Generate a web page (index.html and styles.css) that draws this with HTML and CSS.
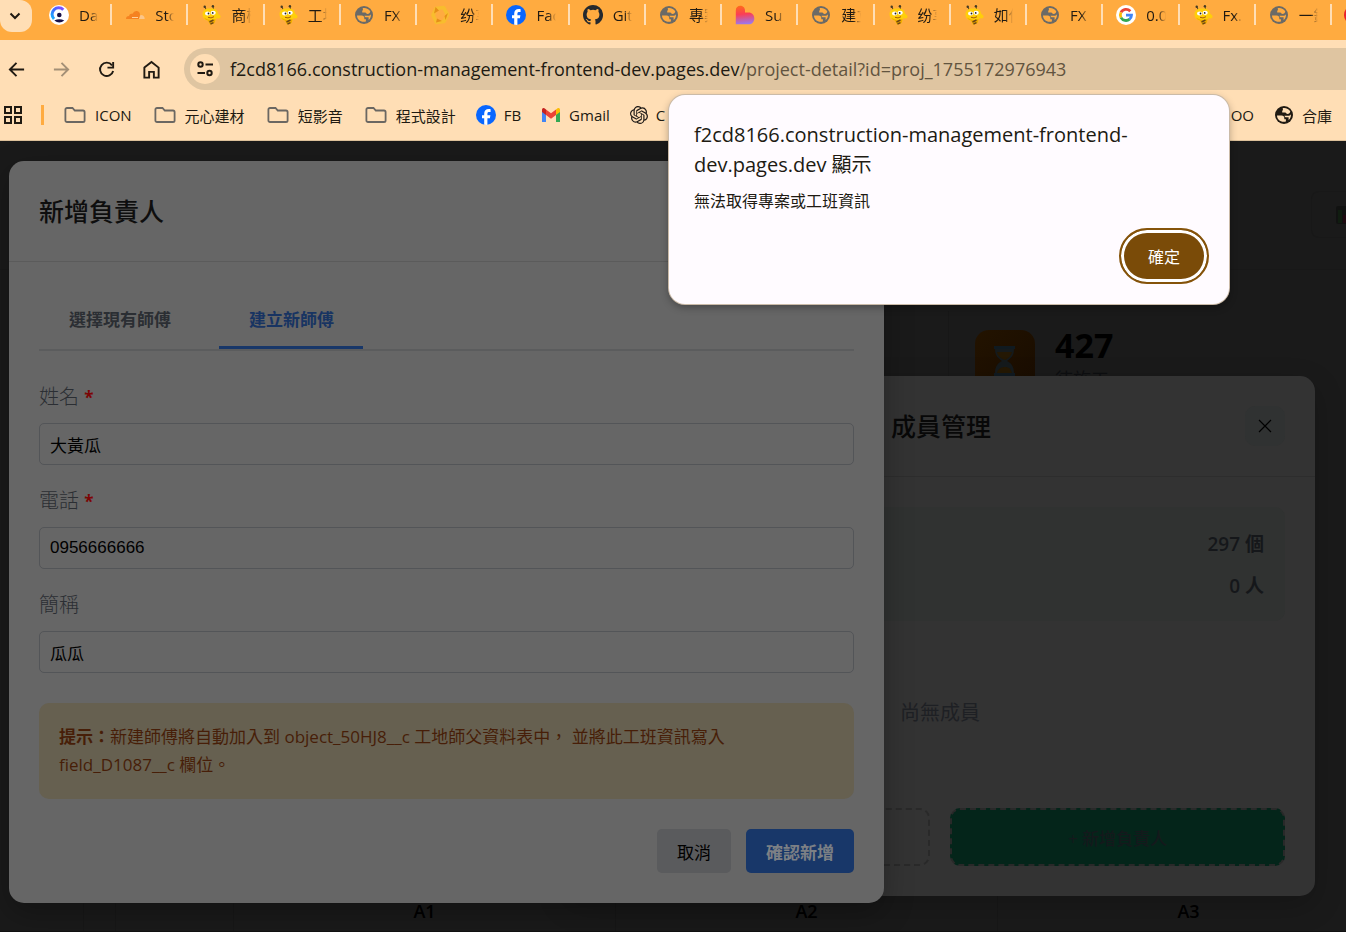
FILE: index.html
```html
<!DOCTYPE html>
<html lang="zh-Hant">
<head>
<meta charset="utf-8">
<meta name="viewport" content="width=device-width, initial-scale=1">
<title>專案詳情</title>
<link rel="stylesheet" href="styles.css">
</head>
<body>
<svg class="sprite" aria-hidden="true">
  <symbol id="i-globe" viewBox="0 0 20 20"><circle cx="10" cy="10" r="9" fill="currentColor"/><path class="globe-land" d="M3 10.500h4.500c2 0 2.800 1 2.800 2.500v1.200h1.600v2.300c-4.900 1.200-8.900-1.700-8.900-6zM8.600 3.200c3-.6 6.400.7 7.700 3.400-.3 1.700-1.300 2.400-2.700 2.400-1 0-1.300-.8-2.200-1.500H8.200V5.800c.8-.4 1-1.400.4-2.600zM16.900 9.200c.3 2.300-.6 4.500-2.300 5.800v-2.700h-2.400c-1 0-1.700-.6-1.700-1.500h3.300c1.600 0 2.500-.5 3.100-1.600z"/></symbol>
  <symbol id="i-bee" viewBox="0 0 20 20"><path d="M5.500 5.500 4 2M12.500 4.500 12 1" stroke="#59421c" stroke-width="1"/><circle cx="3.700" cy="1.800" r="1.200" fill="#453a22"/><circle cx="11.900" cy="1.300" r="1.200" fill="#453a22"/><path d="M1.500 9c0-4 3.900-6 8-5.500C13.600 3 17 5 17 8.500l2.500 2.200c.5 2.300-1.500 3.400-4 2.300L13.500 18 9 19.500l-2-4C3.500 15.500 1.500 12.500 1.500 9z" fill="#ffce0a"/><path d="M3 12.500q5 4 11.500 1.500L13.500 18 9 19.500l-2-4q-2.800-.6-4-3z" fill="#f0a800"/><path d="m8.500 17 4-2M9.500 19l3-1.400" stroke="#6a4515" stroke-width="1.400"/><ellipse cx="6.600" cy="8.500" rx="2.600" ry="2.100" fill="#fff"/><ellipse cx="12.200" cy="7.800" rx="2.600" ry="2.100" fill="#fff"/><circle cx="7.500" cy="8.500" r=".9" fill="#222"/><circle cx="11.700" cy="7.900" r=".9" fill="#222"/><path d="M7 12.300q3 1.600 6-.6" fill="none" stroke="#a65b07"/></symbol>
  <symbol id="i-fb" viewBox="0 0 20 20"><circle cx="10" cy="10" r="10" fill="#0866ff"/><path d="M8.200 19.800v-6.500H6v-3h2.200V8.800c0-3.300 1.500-4.800 4.700-4.800.6 0 1.300.1 1.700.2v2.700h-1.300c-1.500 0-1.900.6-1.900 2v1.400h3l-.5 3h-2.500v6.600z" fill="#fff"/></symbol>
  <symbol id="i-folder" viewBox="0 0 22 18"><path d="M3 2h5.500l2.300 2.500H19a1.600 1.600 0 0 1 1.600 1.600v8.300A1.600 1.600 0 0 1 19 16H3a1.600 1.600 0 0 1-1.600-1.600V3.600A1.600 1.600 0 0 1 3 2z" fill="none" stroke="#6b6762" stroke-width="1.800"/></symbol>
</svg>

<header class="browser">
  <nav class="tabstrip" aria-label="分頁">
    <button class="tab-search" aria-label="搜尋分頁"><svg width="12" height="12" viewBox="0 0 12 12"><path d="m1.500 3.500 4.500 4.500 4.500-4.500" fill="none" stroke="#201a12" stroke-width="2"/></svg></button>
    <a class="tab" href="#"><svg class="fav" viewBox="0 0 20 20"><defs><linearGradient id="clerk" x1="0" y1="1" x2="1" y2="0"><stop offset="0" stop-color="#17b3ff"/><stop offset=".5" stop-color="#3f6bff"/><stop offset="1" stop-color="#8a4dff"/></linearGradient></defs><circle cx="10" cy="10" r="10" fill="#fff"/><path d="M14.300 4.700A6.300 6.300 0 0 0 5 14" fill="none" stroke="url(#clerk)" stroke-width="3"/><circle cx="10.300" cy="10" r="2.300" fill="#171047"/><path d="M5.300 15.600q5-2.800 10 0-5 4-10 0z" fill="#171047"/></svg><span>Da</span></a>
    <a class="tab" href="#"><svg class="fav" viewBox="0 0 20 20"><path d="M1 14q0-3 3-3 .5-3 3.500-2.200Q9 5.500 12 6q3 .7 3 4l-1 4z" fill="#f58220"/><path d="m14 14 1.500-4q4-.2 4.200 4z" fill="#fbc68a"/><path d="M7 12.500h6" stroke="#ffd19a"/></svg><span>Sto</span></a>
    <a class="tab" href="#"><svg class="fav"><use href="#i-bee"/></svg><span>商機</span></a>
    <a class="tab" href="#"><svg class="fav"><use href="#i-bee"/></svg><span>工地</span></a>
    <a class="tab" href="#"><svg class="fav globe"><use href="#i-globe"/></svg><span>FX</span></a>
    <a class="tab" href="#"><svg class="fav" viewBox="0 0 20 20"><path d="m6 3.500 7.500-1 4 7-3.500 7-7.500 1L3 10z" fill="none" stroke="#f8bd2e" stroke-width="3.600" stroke-linejoin="round"/><path d="m5.500 2 3.500 3.500-5 3zM18 8l-3.500 3 1 4zM6 17.500l1-4 5 2.500z" fill="#e58e18"/></svg><span>纷享</span></a>
    <a class="tab" href="#"><svg class="fav"><use href="#i-fb"/></svg><span>Fac</span></a>
    <a class="tab" href="#"><svg class="fav" viewBox="0 0 16 16"><path fill="#25292e" d="M8 0C3.580 0 0 3.580 0 8c0 3.540 2.290 6.530 5.470 7.590.4.070.55-.17.55-.38 0-.19-.01-.82-.01-1.490-2.010.37-2.530-.49-2.690-.94-.09-.23-.48-.94-.82-1.130-.28-.15-.68-.52-.01-.53.63-.01 1.080.58 1.230.82.72 1.210 1.870.87 2.330.66.07-.52.28-.87.51-1.070-1.780-.2-3.640-.89-3.640-3.950 0-.87.31-1.590.82-2.150-.08-.2-.36-1.020.08-2.120 0 0 .67-.21 2.200.82a7.500 7.500 0 0 1 4 0c1.530-1.040 2.200-.82 2.200-.82.44 1.100.16 1.920.08 2.120.51.56.82 1.270.82 2.150 0 3.070-1.870 3.750-3.650 3.950.29.25.54.73.54 1.480 0 1.070-.01 1.930-.01 2.200 0 .21.15.46.55.38A8 8 0 0 0 8 0z"/></svg><span>Git</span></a>
    <a class="tab" href="#"><svg class="fav globe"><use href="#i-globe"/></svg><span>專案</span></a>
    <a class="tab" href="#"><svg class="fav" viewBox="0 0 20 20"><defs><linearGradient id="lov" x1=".3" y1="0" x2=".4" y2="1"><stop offset="0" stop-color="#ff6a1a"/><stop offset=".45" stop-color="#fb3e55"/><stop offset="1" stop-color="#9a78f0"/></linearGradient></defs><path d="M.8 5.500C.8 2.300 3 .8 5.300.8S10 2.400 10 5.500v2h3.600c3.400 0 5.700 2.600 5.700 5.900s-2.400 5.900-5.700 5.900H.8z" fill="url(#lov)"/></svg><span>Su</span></a>
    <a class="tab" href="#"><svg class="fav globe"><use href="#i-globe"/></svg><span>建立</span></a>
    <a class="tab" href="#"><svg class="fav"><use href="#i-bee"/></svg><span>纷享</span></a>
    <a class="tab" href="#"><svg class="fav"><use href="#i-bee"/></svg><span>如何</span></a>
    <a class="tab" href="#"><svg class="fav globe"><use href="#i-globe"/></svg><span>FX</span></a>
    <a class="tab" href="#"><svg class="fav" viewBox="0 0 20 20"><circle cx="10" cy="10" r="10" fill="#fff"/><g fill="none" stroke-width="2.800"><path d="M14.300 6.200A5.700 5.700 0 0 0 5 7.400" stroke="#ea4335"/><path d="M5 7.300a5.700 5.700 0 0 0 0 5.400" stroke="#fbbc05"/><path d="M5 12.600a5.700 5.700 0 0 0 8.600 1.600" stroke="#34a853"/><path d="M13.500 14.300a5.700 5.700 0 0 0 2-4.100H10" stroke="#4285f4"/></g></svg><span>0.0</span></a>
    <a class="tab" href="#"><svg class="fav"><use href="#i-bee"/></svg><span>Fx.</span></a>
    <a class="tab" href="#"><svg class="fav globe"><use href="#i-globe"/></svg><span>一鍵</span></a>
    <a class="tab-next" href="#" aria-label="下一個分頁"><svg class="fav" viewBox="0 0 20 20"><circle cx="10" cy="10" r="10" fill="#e8202a"/></svg></a>
  </nav>

  <div class="toolbar">
    <button class="tool" aria-label="返回"><svg viewBox="0 0 20 20"><path d="M18 10H3.500M10 3 3 10l7 7" fill="none" stroke="#201a12" stroke-width="2"/></svg></button>
    <button class="tool" aria-label="前進"><svg viewBox="0 0 20 20"><path d="M2 10h14.500M10 3l7 7-7 7" fill="none" stroke="#a38f76" stroke-width="2"/></svg></button>
    <button class="tool" aria-label="重新載入"><svg viewBox="0 0 20 20"><path d="M15.800 5.600A7 7 0 1 0 17 11.500" fill="none" stroke="#201a12" stroke-width="2"/><path d="M17 2v6h-6" fill="none" stroke="#201a12" stroke-width="2"/></svg></button>
    <button class="tool" aria-label="首頁"><svg viewBox="0 0 20 20"><path d="M2.500 8 10 2l7.500 6v10.500h-5v-6h-5v6h-5z" fill="none" stroke="#201a12" stroke-width="2"/></svg></button>
    <div class="omnibox">
      <button class="site-info" aria-label="網站資訊"><svg width="18" height="18" viewBox="0 0 18 18"><g fill="none" stroke="#201a12" stroke-width="2"><circle cx="4.500" cy="4.500" r="2.200"/><path d="M9.500 4.500H17M1.500 13H9"/><circle cx="13.500" cy="13" r="2.200"/></g></svg></button>
      <span class="url">f2cd8166.construction-management-frontend-dev.pages.dev<span class="path">/project-detail?id=proj_1755172976943</span></span>
    </div>
  </div>

  <nav class="bookmarks" aria-label="書籤">
    <button class="apps" aria-label="應用程式"><svg width="18" height="18" viewBox="0 0 18 18"><g fill="none" stroke="#201a12" stroke-width="2"><rect x="1" y="1" width="6" height="6"/><rect x="11" y="1" width="6" height="6"/><rect x="1" y="11" width="6" height="6"/><rect x="11" y="11" width="6" height="6"/></g></svg></button>
    <span class="divider"></span>
    <a class="mark" href="#"><svg class="folder"><use href="#i-folder"/></svg>ICON</a>
    <a class="mark" href="#"><svg class="folder"><use href="#i-folder"/></svg>元心建材</a>
    <a class="mark" href="#"><svg class="folder"><use href="#i-folder"/></svg>短影音</a>
    <a class="mark" href="#"><svg class="folder"><use href="#i-folder"/></svg>程式設計</a>
    <a class="mark" href="#"><svg class="fav"><use href="#i-fb"/></svg>FB</a>
    <a class="mark" href="#"><svg class="fav" viewBox="0 0 20 20"><path d="M1 5v12h4V9z" fill="#4285f4"/><path d="M15 9v8h4V5z" fill="#34a853"/><path d="m15 4.500 1.600-1.300C17.800 2.400 19 3.300 19 4.700V7l-4 3z" fill="#fbbc04"/><path d="M5 4.500 10 8.300l5-3.800V10l-5 3.800L5 10z" fill="#ea4335"/><path d="M1 7V4.700c0-1.400 1.200-2.300 2.400-1.500L5 4.500V10z" fill="#c5221f"/></svg>Gmail</a>
    <a class="mark" href="#"><svg class="fav gpt" viewBox="0 0 24 24"><path fill="#1f1a17" d="M22.280 9.820a5.980 5.980 0 0 0-.52-4.910 6.050 6.050 0 0 0-6.510-2.900A6.070 6.070 0 0 0 4.980 4.180a5.980 5.980 0 0 0-4 2.900 6.050 6.050 0 0 0 .74 7.100 5.980 5.980 0 0 0 .51 4.910 6.050 6.050 0 0 0 6.510 2.900A5.980 5.980 0 0 0 13.260 24a6.060 6.060 0 0 0 5.770-4.210 5.990 5.990 0 0 0 4-2.900 6.060 6.060 0 0 0-.75-7.070zm-9.020 12.610a4.480 4.480 0 0 1-2.880-1.040l.14-.08 4.780-2.760a.8.8 0 0 0 .39-.68v-6.740l2.020 1.170a.07.07 0 0 1 .04.050v5.580a4.500 4.500 0 0 1-4.490 4.500zm-9.660-4.130a4.470 4.470 0 0 1-.54-3.010l.14.090 4.780 2.760a.77.77 0 0 0 .78 0l5.840-3.370v2.330a.08.08 0 0 1-.03.060L9.740 19.950a4.500 4.500 0 0 1-6.140-1.650zM2.340 7.900a4.490 4.490 0 0 1 2.370-1.970V11.600a.77.77 0 0 0 .39.680l5.810 3.350-2.020 1.170a.08.08 0 0 1-.07 0l-4.830-2.790A4.500 4.500 0 0 1 2.340 7.870zm16.600 3.850-5.840-3.390L15.120 7.200a.08.08 0 0 1 .07 0l4.830 2.790a4.490 4.490 0 0 1-.68 8.100v-5.680a.79.79 0 0 0-.4-.66zm2.010-3.020-.14-.09-4.770-2.780a.78.78 0 0 0-.79 0L9.410 9.230V6.900a.07.07 0 0 1 .03-.06l4.830-2.790a4.500 4.500 0 0 1 6.680 4.660zM8.310 12.860l-2.020-1.160a.08.08 0 0 1-.04-.06V6.070a4.500 4.500 0 0 1 7.380-3.450l-.14.080-4.780 2.760a.8.8 0 0 0-.39.680zm1.090-2.370 2.610-1.500 2.600 1.500v3l-2.600 1.500-2.610-1.500z"/></svg>C</a>
    <a class="mark mark-end" href="#">OO</a>
    <a class="mark" href="#"><svg class="fav globe dark"><use href="#i-globe"/></svg>合庫</a>
  </nav>
</header>

<main class="page">
  <section class="backdrop">
    <div class="page-head">
      <button class="report" aria-label="報表"><svg width="20" height="18" viewBox="0 0 20 18"><rect width="20" height="18" rx="2" fill="#111211"/><path d="M2 4h4v13H2z" fill="#101d10"/><path d="M7 9h5v8H7z" fill="#200a11"/></svg></button>
    </div>
    <div class="stat">
      <svg class="stat-icon" viewBox="0 0 60 60"><defs><linearGradient id="amber" x1="0" y1="0" x2="1" y2="1"><stop offset="0" stop-color="#231300"/><stop offset="1" stop-color="#180c00"/></linearGradient></defs><rect width="60" height="60" rx="14" fill="url(#amber)"/><path d="M19 16h21v3H19zM19 43h21v3H19z" fill="#101a20"/><path d="M20 19h19c0 7-3 9-7 12 4 2 7 5 7 12H20c0-7 3-10 7-12-4-3-7-5-7-12z" fill="#151a1c"/><path d="M22 22h15c-1 4-3 6-7 8-5-2-7-4-8-8zM22 43c1-4 4-6 8-6s6 2 7 6z" fill="#241804"/></svg>
      <div><strong class="stat-value">427</strong><span class="stat-label">待施工</span></div>
    </div>
    <div class="units"><span></span><span></span><span></span><span>A1</span><span>A2</span><span>A3</span></div>
  </section>

  <section class="modal members" aria-labelledby="members-title">
    <header class="modal-head">
      <h2 id="members-title">成員管理</h2>
      <button class="close" aria-label="關閉"><svg width="14" height="14" viewBox="0 0 14 14"><path d="m1 1 12 12M13 1 1 13" stroke="#000" stroke-width="1.200"/></svg></button>
    </header>
    <div class="modal-body">
      <div class="summary"><span>297 個</span><span>0 人</span></div>
      <p class="empty">尚無成員</p>
      <div class="member-actions">
        <button class="dashed" aria-label="新增成員"></button>
        <button class="dashed lead">+ 新增負責人</button>
      </div>
    </div>
  </section>

  <section class="modal create" aria-labelledby="create-title">
    <header class="modal-head"><h2 id="create-title">新增負責人</h2></header>
    <form class="modal-body">
      <div class="tabs">
        <button type="button" class="tab-btn">選擇現有師傅</button>
        <button type="button" class="tab-btn active">建立新師傅</button>
      </div>
      <div class="field"><label for="name">姓名 <b>*</b></label><input id="name" type="text" value="大黃瓜"></div>
      <div class="field"><label for="phone">電話 <b>*</b></label><input id="phone" type="tel" value="0956666666"></div>
      <div class="field"><label for="nick">簡稱</label><input id="nick" type="text" value="瓜瓜"></div>
      <p class="hint"><strong>提示：</strong>新建師傅將自動加入到 object_50HJ8__c 工地師父資料表中， 並將此工班資訊寫入 field_D1087__c 欄位。</p>
      <div class="form-actions">
        <button type="button" class="btn">取消</button>
        <button type="button" class="btn primary">確認新增</button>
      </div>
    </form>
  </section>
</main>

<div class="alert" role="alertdialog" aria-labelledby="alert-title">
  <h1 id="alert-title">f2cd8166.construction-management-frontend-dev.pages.dev 顯示</h1>
  <p>無法取得專案或工班資訊</p>
  <button class="ok">確定</button>
</div>
</body>
</html>
```
FILE: styles.css
```css
* { box-sizing: border-box; }

body {
  margin: 0;
  min-height: 100vh;
  display: flex;
  flex-direction: column;
  overflow: hidden;
  background: #1a1a1a;
  color: #201a12;
  font-family: "Open Sans", "Noto Sans CJK TC", sans-serif;
  font-size: 15px;
}

button, input { font: inherit; color: inherit; margin: 0; }
button { border: 0; padding: 0; background: none; }
a { color: inherit; text-decoration: none; }
h1, h2, p { margin: 0; font-weight: 400; }
svg { display: block; flex: none; }
.sprite { position: absolute; width: 0; height: 0; }

/* Browser chrome */
.browser { background: #ffdeb5; border-bottom: 1px solid #dcc09a; }

.tabstrip { display: flex; height: 40px; background: #ffab40; overflow: hidden; }
.tab-search {
  width: 32px;
  height: 32px;
  padding-right: 2px;
  margin-right: 4px;
  display: grid;
  place-items: center;
  flex: none;
  background: #ffdeb5;
  border-radius: 0 12px 12px 12px;
}
.tab {
  position: relative;
  flex: 1;
  min-width: 0;
  height: 30px;
  display: flex;
  align-items: center;
  gap: 10px;
  padding: 0 14px 0 13px;
  line-height: 20px;
}
.tab span {
  flex: 1;
  min-width: 0;
  overflow: hidden;
  white-space: nowrap;
  mask-image: linear-gradient(90deg, #000 60%, transparent);
}
.tab::after {
  content: "";
  position: absolute;
  right: 0;
  top: 4px;
  width: 2px;
  height: 21px;
  background: #ffdeb5;
}
.tab-next { width: 14px; padding: 5px 0 0 12px; flex: none; }
.fav { width: 20px; height: 20px; }
.globe { --land: #ffab40; color: #6b6a66; }
.globe-land { fill: var(--land); }
.globe.dark { --land: #ffdeb5; color: #201a12; }
.fav.gpt { width: 18px; height: 18px; }

.toolbar { display: flex; align-items: center; height: 58px; padding-left: 4px; }
.tool { width: 24px; height: 24px; margin-right: 21px; display: grid; place-items: center; flex: none; }
.tool svg { width: 19px; height: 19px; }
.omnibox {
  flex: 1;
  min-width: 0;
  height: 42px;
  display: flex;
  align-items: center;
  gap: 10px;
  padding-left: 6px;
  background: #dfc5a1;
  border-radius: 21px 0 0 21px;
}
.site-info {
  width: 30px;
  height: 30px;
  display: grid;
  place-items: center;
  background: #ffdeb5;
  border-radius: 50%;
}
.url { font-size: 18px; white-space: nowrap; }
.path { color: #62543f; }

.bookmarks { display: flex; align-items: center; height: 42px; padding: 0 14px 8px 4px; white-space: nowrap; }
.divider { width: 3px; height: 20px; margin: 0 18px 0 19px; background: #ffab40; }
.mark { display: flex; align-items: center; gap: 8px; margin-right: 20px; }
.mark:last-child { margin-right: 0; }
.mark-end { margin-left: auto; }
.folder { width: 22px; height: 18px; margin: 0 1px 0 2px; }

/* Page */
.page { position: relative; flex: 1; min-height: 791px; overflow: hidden; }
.backdrop { display: flex; flex-direction: column; position: absolute; inset: 0; color: #000; }
.page-head { display: flex; justify-content: flex-end; align-items: flex-end; height: 129px; padding-bottom: 31px; border-bottom: 1px solid #181818; }
.report { height: 47px; width: 35px; padding-left: 24px; border: 1px solid #181818; border-right: 0; border-radius: 8px 0 0 8px; overflow: hidden; }
.stat { display: flex; gap: 20px; margin: 41px 0 0 948px; padding: 19px 26px; border-left: 1px solid #171717; }
.stat-icon { width: 60px; height: 60px; }
.stat-value { display: block; font-size: 34px; line-height: 30px; }
.stat-label { display: block; margin-top: 6px; font-size: 18px; line-height: 26px; color: #0d0e10; }
.units {
  display: grid;
  grid-template-columns: 84px 32px 118px repeat(3, 382px);
  height: 41px;
  margin-top: auto;
  border-bottom: 1px solid #111;
  font-size: 18px;
  font-weight: 600;
  line-height: 40px;
  text-align: center;
}
.units span { border-right: 1px solid #171717; }

.modal { position: absolute; border-radius: 15px; }
.modal-head { display: flex; align-items: center; justify-content: space-between; height: 101px; padding: 0 30px; border-bottom: 1px solid; }
.modal-head h2 { padding-bottom: 2px; font-size: 25px; font-weight: 500; }
.modal-body { padding: 30px; }

.members { left: 565px; right: 31px; top: 235px; background: #333; color: #15171a; box-shadow: 0 10px 30px #0003; }
.members .modal-head { border-color: #2d2d2d; }
.members h2 { margin-left: 296px; color: #080808; }
.close { width: 40px; height: 40px; display: grid; place-items: center; background: #303232; border-radius: 10px; }
.summary {
  display: grid;
  gap: 12px;
  padding: 22px 21px 20px;
  background: #303231;
  border-radius: 10px;
  text-align: right;
  font-size: 19px;
  font-weight: 600;
  line-height: 30px;
}
.empty { padding: 77px 0 80px; text-align: center; font-size: 20px; line-height: 30px; color: #1e2024; }
.member-actions { display: grid; grid-template-columns: 1fr 1fr; gap: 20px; }
.dashed { height: 58px; border: 2px dashed #292929; border-radius: 10px; }
.lead { background: #04251a; font-size: 17px; font-weight: 500; color: #14191c; }

.create { left: 9px; width: 65%; top: 20px; background: #666; box-shadow: 0 10px 30px #0004; }
.create .modal-head { border-color: #5b5b5b; }
.create h2 { color: #0e0e0e; }
.tabs { display: flex; border-bottom: 2px solid #5b5c5d; }
.tab-btn { height: 58px; padding: 0 29px 0 30px; border-bottom: 3px solid transparent; font-size: 17px; font-weight: 700; color: #2b2e33; }
.tab-btn + .tab-btn { margin-left: 19px; }
.tab-btn.active { color: #183462; border-color: #183769; }
.create .modal-body { padding-top: 29px; }
.field { display: grid; gap: 10px; margin-bottom: 20px; }
.tabs + .field { margin-top: 30px; }
.field label { font-size: 20px; line-height: 32px; color: #2b2e33; font-weight: 300; }
.field b { color: #7c0505; font-size: 17px; line-height: 20px; font-weight: 700; }
.field input {
  width: 100%;
  height: 42px;
  padding: 0 10px;
  border: 1px solid #535558;
  border-radius: 5px;
  background: #666;
  color: #000;
  font-family: "Liberation Sans", "Noto Sans CJK TC", sans-serif;
  font-size: 17px;
}
.hint { margin: 30px 0; padding: 20px; background: #666050; border-radius: 10px; color: #471e08; font-size: 17px; line-height: 28px; }
.form-actions { display: flex; justify-content: flex-end; gap: 15px; }
.btn { height: 44px; padding: 0 20px; background: #5a5b5d; border-radius: 5px; color: #000; font-size: 17px; }
.primary { background: #183769; color: #7c8085; font-weight: 700; }

/* Script alert */
.alert {
  position: absolute;
  top: 95px;
  left: 669px;
  width: 560px;
  display: flex;
  flex-direction: column;
  padding: 25px 20px 20px 25px;
  background: #fffbff;
  border-radius: 16px;
  box-shadow: 0 0 0 1px #cbbba8, 0 3px 8px #0005;
}
.alert h1 { font-size: 20px; line-height: 30px; }
.alert p { margin-top: 9px; font-size: 16px; line-height: 24px; }
.ok {
  align-self: flex-end;
  margin-top: 15px;
  width: 90px;
  height: 56px;
  background: #7a4b08;
  border: 2px solid #85530a;
  border-radius: 28px;
  box-shadow: inset 0 0 0 3px #fff;
  color: #fff;
  font-size: 16px;
}
```
